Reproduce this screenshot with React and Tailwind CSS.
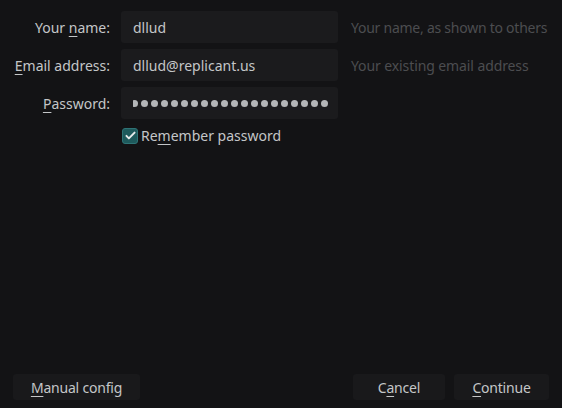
import { useState } from 'react'

function Label({ pre, u, post }) {
  return (
    <span className="w-[110px] shrink-0 text-right">
      {pre}
      <span className="underline underline-offset-[3px] decoration-1">{u}</span>
      {post}
    </span>
  )
}

function Field({ children }) {
  return (
    <div className="w-[217px] h-[32px] shrink-0 rounded-[3px] bg-[#1b1b1d] flex items-center px-[12px] overflow-hidden">
      {children}
    </div>
  )
}

function Btn({ pre, u, post, w }) {
  return (
    <button className={`h-[26px] ${w} rounded-[3px] bg-[#19191b] text-[#c4c6c8] tracking-[-0.2px]`}>
      {pre}
      <span className="underline underline-offset-[3px] decoration-1">{u}</span>
      {post}
    </button>
  )
}

export default function App() {
  const [remember, setRemember] = useState(true)
  const dots = Array.from({ length: 21 })

  return (
    <div className="w-[562px] h-[408px] bg-[#131315] text-[#c4c6c8] text-[14px] flex flex-col font-['Noto_Sans','Open_Sans',sans-serif]">
      <div className="flex flex-col gap-[6px] pt-[11px]">
        <div className="flex items-center gap-[11px]">
          <Label pre="Your " u="n" post="ame:" />
          <Field>dllud</Field>
          <span className="pl-[2px] text-[#4c4d50] whitespace-nowrap tracking-[-0.25px]">Your name, as shown to others</span>
        </div>
        <div className="flex items-center gap-[11px]">
          <Label pre="" u="E" post="mail address:" />
          <Field>dllud@replicant.us</Field>
          <span className="pl-[2px] text-[#4c4d50] whitespace-nowrap tracking-[-0.1px]">Your existing email address</span>
        </div>
        <div className="flex items-center gap-[11px]">
          <Label pre="" u="P" post="assword:" />
          <div className="w-[217px] h-[32px] shrink-0 rounded-[3px] bg-[#1b1b1d] flex items-center pr-[10px] pl-[12px]">
            <div className="flex-1 flex justify-end gap-[3px] overflow-hidden">
              {dots.map((_, i) => (
                <span key={i} className="w-[7px] h-[7px] shrink-0 rounded-full bg-[#b4b6b8]" />
              ))}
            </div>
          </div>
        </div>
        <label className="flex items-center gap-[3px] pl-[122px] cursor-pointer" onClick={() => setRemember(!remember)}>
          <span className="w-[16px] h-[16px] rounded-[3px] bg-[#1e5a5c] border border-[#2f7476] flex items-center justify-center">
            {remember && (
              <svg viewBox="0 0 16 16" className="w-[13px] h-[13px]">
                <path d="M3 8.5l3 3L13 4.5" fill="none" stroke="#e8ecec" strokeWidth="2.4" strokeLinecap="round" strokeLinejoin="round" />
              </svg>
            )}
          </span>
          <span>
            Re<span className="underline underline-offset-[3px] decoration-1">m</span>ember password
          </span>
        </label>
      </div>

      <div className="mt-auto flex items-center px-[13px] pb-[8px]">
        <Btn pre="" u="M" post="anual config" w="w-[127px]" />
        <div className="flex-1" />
        <Btn pre="C" u="a" post="ncel" w="w-[92px]" />
        <div className="w-[9px]" />
        <Btn pre="" u="C" post="ontinue" w="w-[95px]" />
      </div>
    </div>
  )
}
